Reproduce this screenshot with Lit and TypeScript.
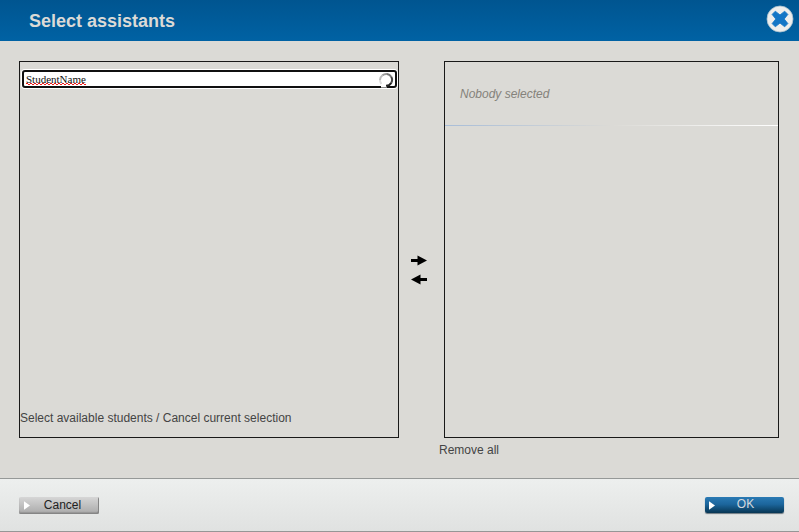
import { LitElement, html, css } from "lit";
import { customElement, property } from "lit/decorators.js";

@customElement("dialog-button")
class DialogButton extends LitElement {
  @property() label = "";
  @property({ type: Boolean, reflect: true }) primary = false;

  static styles = css`
    :host { display: block; }
    .button {
      display: grid;
      grid-template-columns: 14px 1fr;
      align-items: center;
      box-sizing: border-box;
      width: 80px;
      height: 17px;
      padding: 0 12px 0 0;
      border: 0;
      border-radius: 2px;
      background: linear-gradient(#d6d6d6, #a9a9a9);
      box-shadow: inset -1px -1px 0 #858585, inset 0 -2px 1px #969696;
      font: 12px/17px "Liberation Sans", Arial, sans-serif;
      color: #222;
    }
    .arrow { display: block; width: 7px; height: 9px; margin-left: 5px; }
    .label { text-align: center; padding-left: 5px; }
    :host([primary]) .button {
      width: 79px;
      height: 16px;
      background: linear-gradient(#2a7ab4, #1c669d 45%, #073653);
      box-shadow: 0 1px 1px #6c7880;
      color: #d3d8dc;
      line-height: 14px;
    }
    :host([primary]) .arrow { margin-left: 4px; }
    :host([primary]) .label { padding: 0 0 2px 0; }
  `;

  render() {
    return html`<button class="button">
      <svg class="arrow" viewBox="0 0 7 9"><path d="M0 0.3 6 4.5 0 8.7Z" fill="#fff" /></svg>
      <span class="label">${this.label}</span>
    </button>`;
  }
}

@customElement("app-root")
class AppRoot extends LitElement {
  static styles = css`
    :host {
      display: flex;
      flex-direction: column;
      box-sizing: border-box;
      width: 799px;
      height: 532px;
      overflow: hidden;
      background: #dbdad6;
      font: 12px/14px "Liberation Sans", Arial, sans-serif;
      color: #444;
    }
    header {
      display: flex;
      justify-content: space-between;
      flex: none;
      box-sizing: border-box;
      height: 41px;
      padding: 5px 5px 0 29px;
      background: linear-gradient(#005590, #0062a4);
    }
    h1 { margin: 6px 0 0; font-size: 18px; line-height: 21px; color: #dbdad6; }
    .close { display: block; width: 28px; height: 28px; }
    main {
      flex: 1;
      display: grid;
      grid-template-columns: 380px 40px 340px;
      align-items: start;
      box-sizing: border-box;
      padding: 20px 20px 0 19px;
    }
    .panel { box-sizing: border-box; height: 377px; border: 1px solid #191919; }
    .available {
      display: flex;
      flex-direction: column;
      justify-content: space-between;
      padding: 8px 1px 12px 2px;
    }
    .field {
      display: flex;
      justify-content: space-between;
      box-sizing: border-box;
      height: 18px;
      border: 2px solid #101010;
      border-radius: 3px;
      background: #fff;
      box-shadow: 0 0 0 1px #fff;
      padding: 0 1px 0 2px;
      font: 11px/15px "Liberation Serif", "Times New Roman", serif;
      color: #111;
    }
    .typed { position: relative; display: block; height: 14px; line-height: 14px; }
    .wave { position: absolute; left: 0; top: 11px; width: 60px; height: 2px; }
    .spinner { display: block; width: 16px; height: 16px; flex: none; }
    .links { margin-left: -2px; white-space: nowrap; }
    .transfer { display: flex; flex-direction: column; gap: 8px; padding: 194px 0 0 12px; }
    .transfer svg { display: block; width: 16px; height: 11px; }
    .chosen { margin-left: 5px; }
    .empty { height: 63px; padding: 25px 0 0 15px; box-sizing: border-box; font-style: italic; color: #85827b; }
    .rule { height: 1px; background: linear-gradient(90deg, #a8bdd8, #dbdad6 50%, #fff); }
    .remove { display: block; margin-top: 5px; }
    footer {
      display: flex;
      justify-content: space-between;
      flex: none;
      box-sizing: border-box;
      height: 54px;
      padding: 18px 15px 0 19px;
      border-top: 1px solid #969998;
      border-bottom: 1px solid #969696;
      background: linear-gradient(#edefee, #e0e2e1);
    }
  `;

  render() {
    return html`
      <header>
        <h1>Select assistants</h1>
        <svg class="close" viewBox="0 0 28 28">
          <circle cx="14" cy="14" r="13" fill="#eeeeec" stroke="#aac0ce" stroke-width=".8" />
          <path
            d="M9.3 6.2 14 9.9 18.7 6.2 21.9 9.4 18.2 14 21.9 18.6 18.7 21.8 14 18.1 9.3 21.8 6.1 18.6 9.8 14 6.1 9.4Z"
            fill="#1376c6" stroke="#1376c6" stroke-width=".8" stroke-linejoin="round" />
        </svg>
      </header>
      <main>
        <section class="panel available">
          <div class="field">
            <span class="typed">StudentName
              <svg class="wave" viewBox="0 0 60 2" shape-rendering="crispEdges">
                <g fill="none" stroke="#f01818" stroke-width="1">
                  <path d="M0 .5H60" stroke-dasharray="2 2" />
                  <path d="M2 1.5H60" stroke-dasharray="2 2" />
                </g>
              </svg>
            </span>
            <svg class="spinner" viewBox="0 0 16 16">
              <rect x="3" y="14" width="6" height="1.5" fill="#fff" />
              <g fill="none" stroke-width="2" transform="translate(0 .8)">
                <path d="M3.4 11.2A6 6 0 0 1 2 7.3" stroke="#ddd" />
                <path d="M2 7.3A6 6 0 0 1 4.5 2.5" stroke="#bbb" />
                <path d="M4.5 2.5A6 6 0 0 1 9 1.2" stroke="#999" />
                <path d="M9 1.2A6 6 0 0 1 13.2 4" stroke="#777" />
                <path d="M13.2 4A6 6 0 0 1 13.3 10" stroke="#444" />
                <path d="M13.3 10A6 6 0 0 1 8 13" stroke="#222" />
              </g>
            </svg>
          </div>
          <div class="links">Select available students / Cancel current selection</div>
        </section>
        <div class="transfer">
          <svg viewBox="0 0 16 11"><path d="M0 4H6.5V.5L16 5.5 6.5 10.5V7H0Z" /></svg>
          <svg viewBox="0 0 16 11"><path d="M16 4H9.5V.5L0 5.5 9.5 10.5V7H16Z" /></svg>
        </div>
        <section>
          <div class="panel chosen">
            <div class="empty">Nobody selected</div>
            <div class="rule"></div>
          </div>
          <span class="remove">Remove all</span>
        </section>
      </main>
      <footer>
        <dialog-button label="Cancel"></dialog-button>
        <dialog-button label="OK" primary></dialog-button>
      </footer>
    `;
  }
}
